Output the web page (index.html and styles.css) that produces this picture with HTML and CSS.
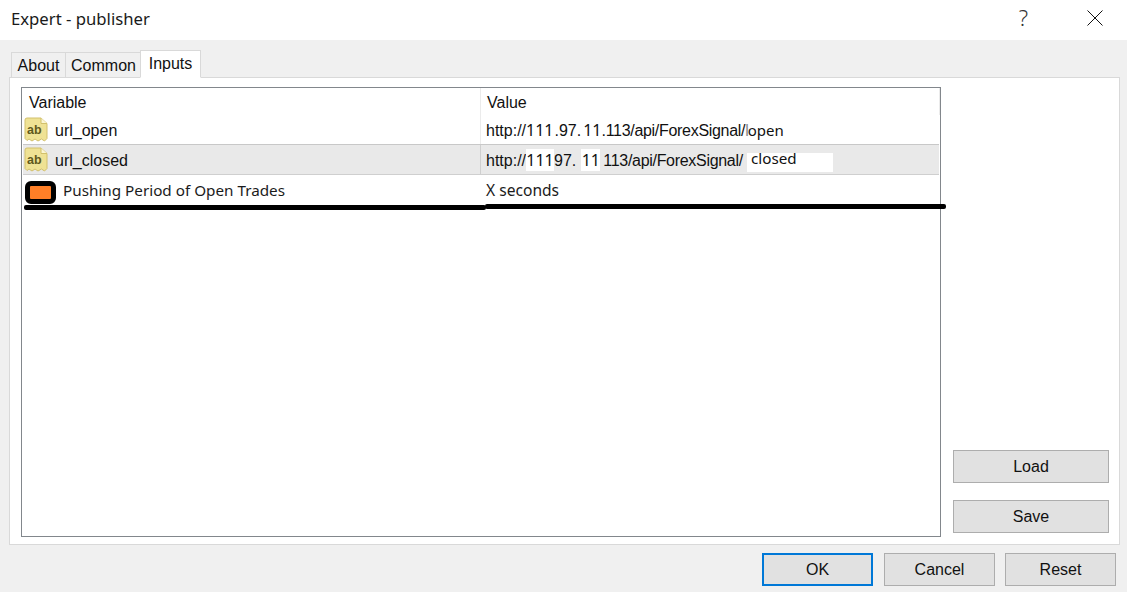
FILE: index.html
```html
<!DOCTYPE html>
<html lang="en">
<head>
<meta charset="utf-8">
<title>Expert - publisher</title>
<link rel="stylesheet" href="styles.css">
</head>
<body>
<div class="dialog">
  <header class="titlebar">
    <span class="title">Expert - publisher</span>
    <span class="help">?</span>
    <svg class="close" width="16" height="16" viewBox="0 0 16 16"><path d="M0.5 0.5L15.500 15.500M15.500 0.5L0.5 15.500" stroke="#111" stroke-width="1" fill="none"/></svg>
  </header>
  <div class="client">
    <nav class="tabs">
      <span class="tab tab-about">About</span>
      <span class="tab tab-common">Common</span>
      <span class="tab tab-active">Inputs</span>
    </nav>
    <section class="panel">
      <div class="table">
        <div class="row head">
          <div class="cell var"><span class="head-var">Variable</span></div>
          <div class="cell val"><span class="head-val">Value</span></div>
        </div>
        <div class="row r1">
          <div class="cell var">
            <svg class="ab" width="24" height="25" viewBox="0 0 24 25"><path d="M1 3Q1 1 3 1H17L23 6.500V21.500L20.500 24L17.500 22L14 24L11 22L8 24L5 22L3 23.500L1 21.500Z" fill="#efe294" stroke="#d2c06c"/><path d="M17 1V6.500H23" fill="#fbf6d2" stroke="#d2c06c"/><text x="3" y="17" class="ab-text">ab</text></svg>
            <span class="name">url_open</span>
          </div>
          <div class="cell val"><span class="url">http://<span class="ip ip3">111</span><span class="ip-a">.97.</span><span class="ip ip2">11</span><span class="tail">.113/api/ForexSignal/</span><span class="thin">l</span><span class="end-word">open</span></span></div>
        </div>
        <div class="row r2">
          <div class="cell var">
            <svg class="ab" width="24" height="25" viewBox="0 0 24 25"><path d="M1 3Q1 1 3 1H17L23 6.500V21.500L20.500 24L17.500 22L14 24L11 22L8 24L5 22L3 23.500L1 21.500Z" fill="#efe294" stroke="#d2c06c"/><path d="M17 1V6.500H23" fill="#fbf6d2" stroke="#d2c06c"/><text x="3" y="17" class="ab-text">ab</text></svg>
            <span class="name">url_closed</span>
          </div>
          <div class="cell val">
            <span class="url">http://<span class="patch p1">111</span><span class="ip-b">97.</span><span class="patch p2">11</span><span class="tail">113/api/ForexSignal/</span></span>
            <span class="patch-end">closed</span>
          </div>
        </div>
        <div class="row r3">
          <div class="cell var">
            <span class="swatch"></span>
            <span class="paint paint-name">Pushing Period of Open Trades</span>
          </div>
          <div class="cell val"><span class="paint">X seconds</span></div>
        </div>
        <span class="ink ink-left"></span>
        <span class="ink ink-right"></span>
      </div>
      <aside class="side">
        <button class="btn side-btn">Load</button>
        <button class="btn side-btn">Save</button>
      </aside>
    </section>
    <footer class="actions">
      <button class="btn act-btn default">OK</button>
      <button class="btn act-btn">Cancel</button>
      <button class="btn act-btn">Reset</button>
    </footer>
  </div>
</div>
</body>
</html>
```
FILE: styles.css
```css
* { box-sizing: border-box; }
html, body { margin: 0; padding: 0; }
body {
  width: 1127px;
  height: 592px;
  overflow: hidden;
  background: #fff;
  font-family: "Liberation Sans", Arial, sans-serif;
  font-size: 16px;
  color: #111;
}
.dialog { display: flex; flex-direction: column; height: 592px; }

.titlebar {
  height: 40px;
  flex: none;
  display: flex;
  align-items: center;
  background: #fff;
  padding-left: 11px;
}
.title { font-family: "Noto Sans", sans-serif; font-size: 16.700px; color: #1a1a1a; flex: 1; position: relative; top: -2px; }
.help { font-family: "Noto Sans", sans-serif; font-weight: 300; font-size: 22px; line-height: 22px; color: #333; margin-right: 59px; position: relative; top: -3px; }
.close { margin-right: 24px; position: relative; top: -2px; }

.client { flex: 1; background: #f0f0f0; display: flex; flex-direction: column; padding: 10px 7px 6px 9px; }

.tabs { display: flex; align-items: flex-end; height: 28px; padding-left: 2px; flex: none; position: relative; z-index: 1; margin-bottom: -1px; }
.tab {
  height: 26px;
  border: 1px solid #d9d9d9;
  border-bottom: 1px solid #d9d9d9;
  margin-left: -1px;
  background: #f0f0f0;
  display: flex;
  align-items: center;
  justify-content: center;
  padding-top: 2px;
}
.tab-about { width: 55px; margin-left: 0; }
.tab-common { width: 76px; padding-left: 1px; }
.tab-active { width: 61px; height: 28px; background: #fff; padding-top: 0; border-bottom: 1px solid #fff; }

.panel {
  width: 1111px;
  height: 468px;
  flex: none;
  background: #fff;
  border: 1px solid #d9d9d9;
  padding: 9px 10px 7px 11px;
  display: flex;
  gap: 12px;
}

.table {
  position: relative;
  width: 920px;
  height: 450px;
  flex: none;
  border: 1px solid #82878c;
  padding: 0 1px;
  background: #fff;
}
.row { display: grid; grid-template-columns: 457px 460px; height: 30px; }
.row.head { height: 27px; }
.cell { display: flex; align-items: center; height: 100%; min-width: 0; white-space: nowrap; }
.head .cell, .r1 .cell, .r2 .cell { padding-top: 2px; }
.head .cell.val { border-left: 1px solid #ebebeb; border-right: 1px solid #ebebeb; }
.head-var { margin-left: 6px; }
.head-val { margin-left: 6px; }
.r1 { border-bottom: 1px solid #c8c8c8; }
.r1 .val { border-left: 1px solid #ebebeb; }
.r2 { background: #e9e9e9; border-bottom: 1px solid #cfcfcf; }
.r2 .val { border-left: 1px solid #cfcfcf; position: relative; }
.ab { flex: none; margin: -3px 0 0 1px; }
.ab-text { font-family: "Liberation Sans", sans-serif; font-size: 12.500px; font-weight: 700; fill: #5f5a1c; }
.name { margin-left: 7px; }
.url { margin: -2px 0 0 5px; display: inline-block; }
.ip { font-family: "Noto Sans", sans-serif; font-size: 16px; }
.ip-a { margin-left: 1px; margin-right: 2px; }
.tail { letter-spacing: -0.3px; }
.thin { color: #888; letter-spacing: -1px; }
.end-word { font-family: "Noto Sans", sans-serif; font-size: 15px; }
.patch { display: inline-block; background: #fff; font-family: "Noto Sans", sans-serif; font-size: 16px; line-height: 22px; text-align: center; vertical-align: baseline; }
.p1 { width: 28px; }
.p2 { width: 19px; margin-left: 5px; margin-right: 3px; }
.patch-end {
  background: #fff;
  width: 86px;
  height: 19px;
  position: absolute;
  left: 266px;
  top: 8px;
  font-family: "Noto Sans", sans-serif;
  font-size: 15.200px;
  line-height: 10px;
  padding-left: 4px;
}
.paint { font-family: "Noto Sans", sans-serif; font-size: 15.600px; color: #1b1b1b; margin-left: 6px; }
.paint-name { font-size: 15.250px; margin-left: 7px; }
.swatch {
  width: 31px;
  height: 23px;
  flex: none;
  margin: 5px 0 0 2px;
  background: #ff7f27;
  border: 5px solid #000;
  border-radius: 6px;
}

.ink { position: absolute; background: #000; height: 5px; border-radius: 2px; }
.ink-left { left: 2px; top: 117px; width: 462px; }
.ink-right { left: 463px; top: 116px; width: 461px; }

.side { display: flex; flex-direction: column; align-items: flex-start; justify-content: flex-end; gap: 17px; padding-bottom: 4px; }
.btn {
  font-family: "Liberation Sans", Arial, sans-serif;
  font-size: 16px;
  color: #111;
  background: #e1e1e1;
  border: 1px solid #adadad;
  border-radius: 0;
  padding: 0;
  height: 33px;
}
.side-btn { width: 156px; }

.actions { display: flex; justify-content: flex-end; gap: 10px; padding-top: 8px; padding-right: 4px; }
.act-btn { width: 111px; }
.default { border: 2px solid #0078d7; margin-right: 1px; }
```
